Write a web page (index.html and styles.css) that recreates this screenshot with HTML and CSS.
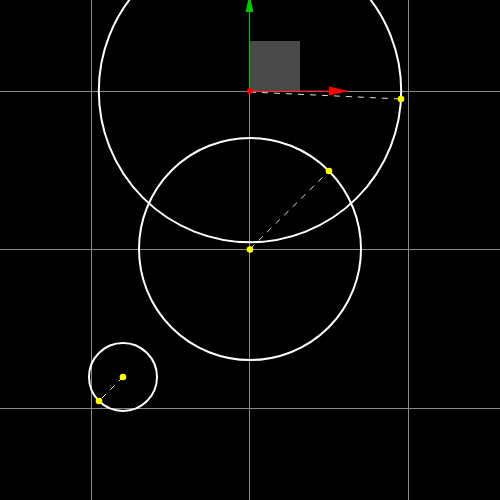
FILE: index.html
```html
<!DOCTYPE html>
<html>
<head>
<meta charset="utf-8">
<link rel="stylesheet" href="styles.css">
</head>
<body>
<svg class="stage" width="500" height="500" viewBox="0 0 500 500" xmlns="http://www.w3.org/2000/svg">
  <g class="grid">
    <line x1="91.5" y1="0" x2="91.5" y2="500"/>
    <line x1="249.5" y1="0" x2="249.5" y2="500"/>
    <line x1="408.5" y1="0" x2="408.5" y2="500"/>
    <line x1="0" y1="91.5" x2="500" y2="91.5"/>
    <line x1="0" y1="249.5" x2="500" y2="249.5"/>
    <line x1="0" y1="408.5" x2="500" y2="408.5"/>
  </g>
  <rect class="box" x="250" y="41" width="50" height="50"/>
  <g class="circles">
    <circle cx="250" cy="91" r="151.2"/>
    <circle cx="250" cy="249" r="111"/>
    <circle cx="123" cy="377" r="34"/>
  </g>
  <g class="dash">
    <line x1="250" y1="92" x2="401" y2="99"/>
    <line x1="250" y1="249" x2="329" y2="171"/>
    <line x1="123" y1="377" x2="99" y2="401"/>
  </g>
  <line class="axis-y" x1="249.5" y1="91" x2="249.5" y2="8"/>
  <polygon class="head-y" points="249.5,-6 245.5,12 253.5,12"/>
  <line class="axis-x" x1="250" y1="91" x2="332" y2="91"/>
  <polygon class="head-x" points="349,91 329,86.5 329,95.5"/>
  <circle class="origin" cx="250" cy="91" r="3"/>
  <g class="pts">
    <circle cx="401" cy="99" r="3.3"/>
    <circle cx="329" cy="171" r="3.3"/>
    <circle cx="250" cy="249.5" r="3.3"/>
    <circle cx="123" cy="377" r="3.3"/>
    <circle cx="99" cy="401" r="3.3"/>
  </g>
</svg>
</body>
</html>
```
FILE: styles.css
```css
html, body {
  margin: 0;
  padding: 0;
  background: #000;
  overflow: hidden;
}
.stage {
  display: block;
}
.grid line {
  stroke: #8a8a8a;
  stroke-width: 1;
}
.box {
  fill: #4a4a4a;
}
.circles circle {
  fill: none;
  stroke: #fff;
  stroke-width: 2;
}
.dash line {
  stroke: #e0e0e0;
  stroke-width: 1;
  stroke-dasharray: 6 6;
}
.axis-y {
  stroke: #00c800;
  stroke-width: 1;
}
.head-y {
  fill: #00c800;
}
.axis-x {
  stroke: #f00;
  stroke-width: 1;
}
.head-x {
  fill: #f00;
}
.origin {
  fill: #f00;
}
.pts circle {
  fill: #ff0;
}
```
